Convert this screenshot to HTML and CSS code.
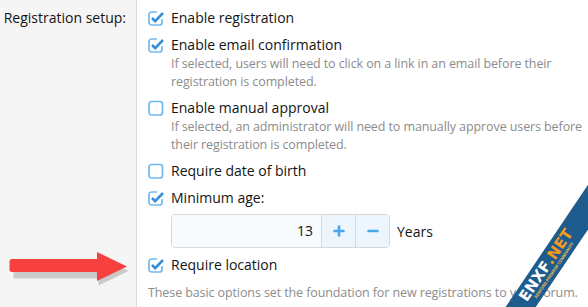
FILE: index.html
```html
<!DOCTYPE html>
<html lang="en">
<head>
  <meta charset="UTF-8" />
  <title>Registration setup</title>
  <link rel="stylesheet" href="styles.css">
</head>
<body>
  <div class="form-row">
    <div class="form-label">Registration setup:</div>
    <div class="form-input">
      <div class="choice">
        <label class="check"><span class="box on"></span>Enable registration</label>
      </div>
      <div class="choice">
        <label class="check"><span class="box on"></span>Enable email confirmation</label>
        <div class="hint">If selected, users will need to click on a link in an email before their registration is completed.</div>
      </div>
      <div class="choice">
        <label class="check"><span class="box"></span>Enable manual approval</label>
        <div class="hint">If selected, an administrator will need to manually approve users before their registration is completed.</div>
      </div>
      <div class="choice">
        <label class="check"><span class="box"></span>Require date of birth</label>
      </div>
      <div class="choice">
        <label class="check"><span class="box on"></span>Minimum age:</label>
        <div class="age-row">
          <div class="spinbox">
            <div class="spin-value">13</div>
            <button class="spin-btn">
              <svg width="12" height="12" viewBox="0 0 12 12"><path d="M6 1.5v9M1.5 6h9" stroke="#47a7eb" stroke-width="2.6" stroke-linecap="round"/></svg>
            </button>
            <button class="spin-btn">
              <svg width="12" height="12" viewBox="0 0 12 12"><path d="M1.5 6h9" stroke="#47a7eb" stroke-width="2.6" stroke-linecap="round"/></svg>
            </button>
          </div>
          <span class="unit">Years</span>
        </div>
      </div>
      <div class="choice">
        <label class="check"><span class="box on"></span>Require location</label>
      </div>
      <div class="explain">These basic options set the foundation for new registrations to your forum.</div>
    </div>
  </div>

  <svg class="arrow" width="130" height="40" viewBox="0 0 130 40">
    <path d="M12 13h85V6l30 14.5L97 35v-7H12z" fill="#8a8a8a" opacity="0.4" transform="translate(1.5 2.5)"/>
    <path d="M12 11h85V4l30 14.5L97 33v-9H12a2.5 2.5 0 0 1-2.5-2.5v-8A2.5 2.5 0 0 1 12 11z" fill="#f7413f"/>
  </svg>

  <div class="stamp">
    <span class="stamp-name">ENXF<b>.NET</b></span>
    <span class="stamp-sub">XENFORO PREMIUM COMMUNITY</span>
  </div>
</body>
</html>
```

FILE: styles.css
```css
body {
  margin: 0;
  font-family: 'Open Sans', 'Noto Sans', sans-serif;
  color: #141414;
  background: #fff;
  position: relative;
  height: 307px;
  overflow: hidden;
}
.form-row {
  display: flex;
  height: 307px;
}
.form-label {
  width: 126px;
  padding: 8px 10px 0 0;
  text-align: right;
  background: #f5f5f5;
  border-right: 1px solid #dcdcdc;
  font-size: 14px;
  line-height: 20px;
}
.form-input {
  padding: 8px 0 0 11px;
  flex: 1;
}
.choice {
  margin-bottom: 7px;
}
.check {
  display: flex;
  align-items: center;
  font-size: 14px;
  line-height: 20px;
}
.box {
  width: 16px;
  height: 16px;
  margin-right: 7px;
  background: url("data:image/svg+xml,%3Csvg xmlns='http://www.w3.org/2000/svg' width='16' height='16'%3E%3Crect x='1' y='1.5' width='13.5' height='13.5' rx='2.5' fill='none' stroke='%2371b9ef' stroke-width='1.7'/%3E%3C/svg%3E");
}
.box.on {
  background: url("data:image/svg+xml,%3Csvg xmlns='http://www.w3.org/2000/svg' width='16' height='16'%3E%3Cpath d='M9 2H3.5A2.5 2.5 0 0 0 1 4.5v8A2.5 2.5 0 0 0 3.5 15h8a2.5 2.5 0 0 0 2.5-2.5V9' fill='none' stroke='%2371b9ef' stroke-width='1.7'/%3E%3Cpath d='M4 8l3.2 3.2L15 3' fill='none' stroke='%23368fdc' stroke-width='2.6'/%3E%3C/svg%3E");
}
.hint {
  margin-left: 23px;
  font-size: 12.5px;
  line-height: 18px;
  color: #8c8c8c;
  letter-spacing: -0.1px;
}
.age-row {
  display: flex;
  align-items: center;
  margin: 6px 0 1px 23px;
}
.spinbox {
  display: flex;
  height: 34px;
  border: 1px solid #d8d8d8;
  border-radius: 4px;
  box-sizing: border-box;
  overflow: hidden;
}
.spin-value {
  width: 141px;
  padding-right: 8px;
  text-align: right;
  line-height: 32px;
  font-size: 14px;
  background: #f8fbfe;
}
.spin-btn {
  width: 34px;
  border: none;
  border-left: 1px solid #d8d8d8;
  background: #edf5fd;
  display: flex;
  align-items: center;
  justify-content: center;
  padding: 0;
}
.unit {
  margin-left: 7px;
  font-size: 14px;
}
.explain {
  margin-top: 9px;
  font-size: 12.5px;
  line-height: 18px;
  color: #8c8c8c;
  letter-spacing: -0.1px;
  white-space: nowrap;
}
.arrow {
  position: absolute;
  left: 0;
  top: 248px;
}
.stamp {
  position: absolute;
  left: 448px;
  top: 254px;
  width: 200px;
  height: 25px;
  background: #1f5c8e;
  transform: rotate(-56deg);
  display: flex;
  flex-direction: column;
  align-items: center;
  justify-content: center;
}
.stamp-name {
  color: #fff;
  font-weight: 800;
  font-size: 15px;
  line-height: 14px;
  font-family: 'DejaVu Sans', sans-serif;
}
.stamp-name b {
  color: #f49a1c;
}
.stamp-sub {
  color: #f3c64a;
  font-size: 4px;
  line-height: 6px;
  font-weight: bold;
}
```
